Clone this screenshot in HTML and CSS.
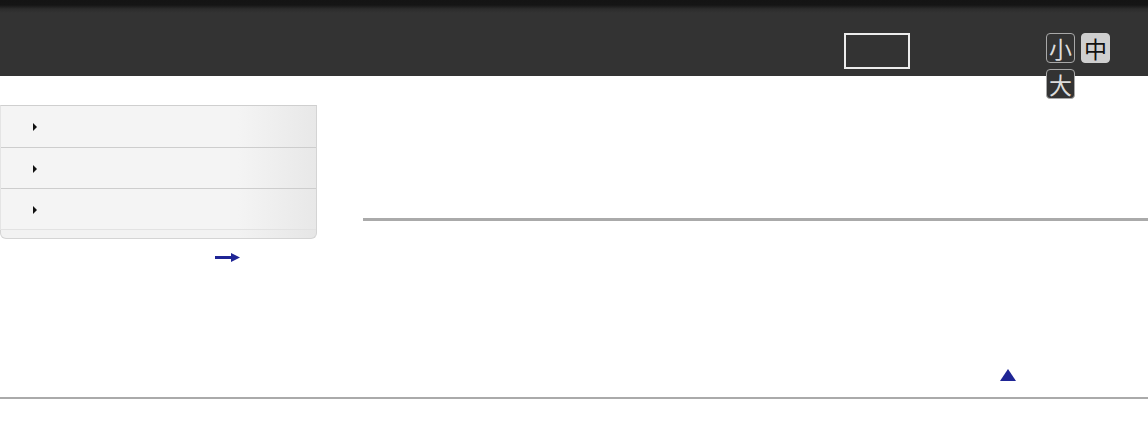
FILE: index.html
```html
<!DOCTYPE html>
<html lang="ja">
<head>
    <meta charset="UTF-8">
    <title>Help Guide</title>
    <link rel="stylesheet" href="styles.css">
</head>
<body>
    <header class="masthead">
        <div class="search-box"></div>
        <div class="font-size">
            <span class="size-btn">小</span>
            <span class="size-btn active">中</span>
            <span class="size-btn">大</span>
        </div>
    </header>

    <div class="page">
        <aside class="sidebar">
            <ul class="menu">
                <li class="menu-item"><span class="bullet"></span></li>
                <li class="menu-item"><span class="bullet"></span></li>
                <li class="menu-item"><span class="bullet"></span></li>
            </ul>
            <div class="menu-foot"></div>
            <div class="more-link">
                <svg width="25" height="9" viewBox="0 0 25 9">
                    <rect x="0" y="3" width="17" height="3" fill="#1f2595"/>
                    <polygon points="16,0 25,4.5 16,9" fill="#1f2595"/>
                </svg>
            </div>
        </aside>
        <main class="content">
            <div class="rule"></div>
        </main>
    </div>

    <div class="page-top"><span class="up-arrow"></span></div>
    <footer class="footer"></footer>
</body>
</html>
```

FILE: styles.css
```css
/* Base */
body {
    margin: 0;
    font-family: "Liberation Sans", "Noto Sans CJK JP", sans-serif;
    background-color: #ffffff;
    color: #333;
}

/* Header */
.masthead {
    height: 76px;
    box-sizing: border-box;
    padding-top: 33px;
    display: flex;
    align-items: flex-start;
    background: linear-gradient(#141414 0, #151515 5px, #2c2c2c 9px, #333 13px, #333 100%);
}

.search-box {
    margin-left: 844px;
    width: 62px;
    height: 32px;
    border: 2px solid #ececec;
}

.font-size {
    margin-left: 136px;
    width: 72px;
    display: flex;
    flex-wrap: wrap;
    gap: 6px 6px;
}

.size-btn {
    width: 27px;
    height: 28px;
    border: 1px solid #a8a8a8;
    border-radius: 4px;
    background-color: #333;
    color: #dcdcdc;
    font-family: "Noto Sans CJK JP", sans-serif;
    font-size: 23px;
    line-height: 28px;
    text-align: center;
}

.size-btn.active {
    background-color: #cfcfcf;
    border-color: #cfcfcf;
    color: #111;
}

/* Layout */
.page {
    display: flex;
    align-items: flex-start;
}

.sidebar {
    width: 317px;
    padding-top: 29px;
}

.menu {
    list-style: none;
    margin: 0;
    padding: 0;
    border-top: 1px solid #cfcfcf;
    border-right: 1px solid #d4d4d4;
    border-left: 1px solid #e4e4e4;
}

.menu-item {
    height: 40px;
    border-bottom: 1px solid #cdcdcd;
    background: linear-gradient(to right, #f4f4f4 0, #f4f4f4 75%, #e8e8e8 100%);
    display: flex;
    align-items: center;
    padding-left: 32px;
}

.menu-item:first-child {
    height: 41px;
}

.menu-item:last-child {
    border-bottom-color: #e2e2e2;
}

.bullet {
    width: 0;
    height: 0;
    margin-top: 1px;
    border-top: 4px solid transparent;
    border-bottom: 4px solid transparent;
    border-left: 4px solid #111;
}

.menu-foot {
    height: 8px;
    border: 1px solid #d4d4d4;
    border-top: none;
    border-radius: 0 0 6px 6px;
    background: linear-gradient(to right, #f2f2f2 0, #f2f2f2 75%, #e6e6e6 100%);
}

.more-link {
    text-align: right;
    padding-right: 77px;
    margin-top: 9px;
    height: 27px;
}

.content {
    flex: 1;
    margin-left: 46px;
    padding-top: 142px;
}

.rule {
    height: 3px;
    background-color: #aaaaaa;
}

/* Page top */
.page-top {
    padding-top: 94px;
    padding-right: 132px;
    text-align: right;
    height: 12px;
    line-height: 0;
}

.up-arrow {
    display: inline-block;
    width: 0;
    height: 0;
    border-left: 8px solid transparent;
    border-right: 8px solid transparent;
    border-bottom: 12px solid #1f2595;
}

.footer {
    margin-top: 16px;
    height: 2px;
    background-color: #aaaaaa;
}
```
